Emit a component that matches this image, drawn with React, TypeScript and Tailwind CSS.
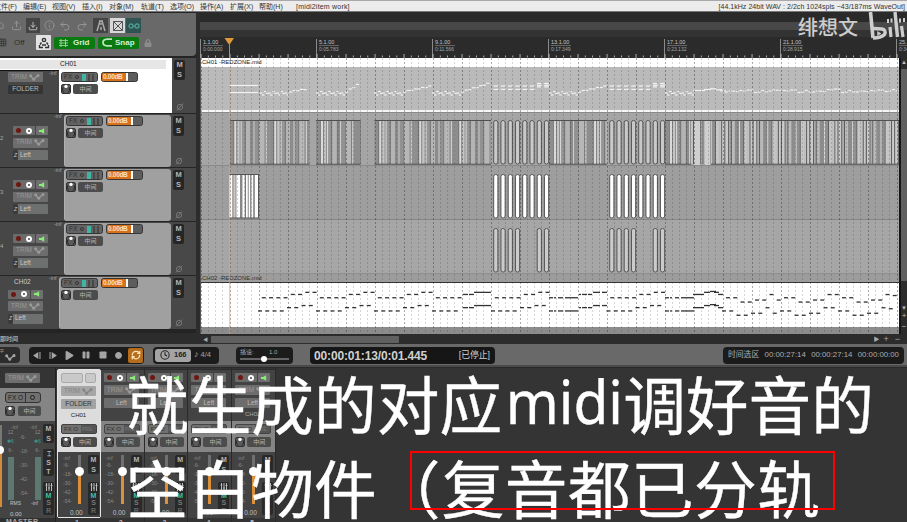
import React from "react";
import {
  FaPlay, FaPause, FaStop, FaCircle, FaLock,
} from "react-icons/fa";
import { RefreshCw, Clock, Upload, Download, Grid3x3, Info, Undo2, Redo2 } from "lucide-react";

const CJK = "font-['Liberation_Sans','Noto_Sans_CJK_SC',sans-serif]";
const ORIGIN = 200.6;
const BEAT = 7.25;

/* ---------- note and clip data ---------- */

type Dash = [x: number, y: number, w: number];

function phrase(s: number, end: number, rise: number): Dash[] {
  const out: Dash[] = [];
  for (let i = 0; i < 7; i++) {
    out.push([s + i * 4.1, i % 2 ? 91.5 : 93, 2.6]);
    out.push([s + 2 + i * 4.1, i % 2 ? 93.5 : 95, 2.4]);
  }
  const n = Math.floor((end - s - 29) / 3.6);
  for (let i = 0; i < n; i++) {
    out.push([s + 29 + i * 3.6, 92 - (rise * i) / n - (i % 2 ? 0.8 : 0), 3.2]);
  }
  return out;
}

function pairs(s: number): Dash[] {
  const out: Dash[] = [];
  for (let i = 0; i < 8; i++) {
    const y = i > 5 ? 83.5 : 86;
    out.push([s + i * BEAT, y, 4.6], [s + i * BEAT, y + 3.4, 4.6]);
    if (i > 5) out.push([s + i * BEAT, y + 1.8, 4.6]);
  }
  return out;
}

const wave = [92, 91, 90.5, 91.5, 92.5, 91, 90, 91.8, 90.5, 92, 91.2, 90.2];
const ch1Notes: Dash[] = [
  [229, 85.5, 29], [229, 92.5, 29],
  ...phrase(260, 309, 3), ...phrase(316, 361, 9), ...phrase(374, 432, 6), ...phrase(432, 491, 9),
  ...pairs(493.5), ...phrase(549, 607, 6), ...pairs(609.5), ...phrase(665, 694, 2),
  [693, 90.5, 12], [704, 89.5, 7], [710, 88.8, 6], [716, 89.8, 6], [720, 90.8, 6],
  ...Array.from({ length: 48 }, (_, i): Dash => [725 + i * 3.63, wave[(i * 5) % 12] + (i % 16 > 11 ? -1 : 0), 2.9]),
];

const L = 297.7, M = 294.4, H = 292.3;
function eight(s: number): Dash[] {
  const ys = [L, L, L, L, M, M, H, H];
  return ys.flatMap((y, i): Dash[] => [
    [s + 3.8 + i * BEAT, y, 4], [s + i * BEAT, y + 13.2, 4],
  ]);
}
function both(d: Dash[]): Dash[] {
  return d.flatMap(([x, y, w]): Dash[] => [[x, y, w], [x, y + 13.2, w]]);
}
const tail = [297.7, 297.7, 302, 302, 300, 300, 294.5, 300, 297.7, 297.7, 302, 302, 300, 300, 294.5, 294.5, 297.7, 297.7, 302, 302, 300, 300, 294.5, 295.5];
const ch2Notes: Dash[] = [
  ...eight(258), ...eight(316), ...eight(374),
  ...eight(432).slice(0, 8),
  ...both([[463, M, 5], [469, M, 5], [474, H, 17]]),
  ...eight(491),
  ...both([[549, L, 4], [554, L, 2], [558, L, 5], [565, L, 13], [579, M, 2], [582, M, 5], [588, M, 4], [593, H, 7], [602, H, 5]]),
  ...eight(606.5),
  ...both([[665, L, 4], [670, L, 2], [675, L, 4], [681, L, 13], [693, M, 11], [704, H, 6], [710, 291.4, 6], [714, H, 5], [718, M, 5]]),
  ...tail.flatMap((y, i): Dash[] => [[726 + i * BEAT, y, 4], [722 + i * BEAT, y + 13.2, 4]]),
];

const stripes: [number, string][] = [
  [4, "#8d8d8d"], [0.8, "#5e5e5e"], [2.2, "#dadada"], [0.8, "#6a6a6a"], [2.4, "#c4c4c4"], [1, "#8a8a8a"],
  [1, "#e4e4e4"], [3.2, "#969696"], [0.9, "#606060"], [4.6, "#b4b4b4"], [1, "#747474"], [2.2, "#8b8b8b"],
  [1, "#d2d2d2"], [3.9, "#929292"], [0.8, "#666666"], [5.4, "#b7b7b7"], [1, "#777777"], [1.4, "#cccccc"], [2.4, "#8d8d8d"],
];
const dense: [number, string][] = [
  [2, "#c2c2c2"], [1, "#585858"], [2, "#c9c9c9"], [1.2, "#666666"], [2.6, "#cacaca"], [1, "#606060"], [1.8, "#aaaaaa"],
  [1, "#555555"], [3, "#bababa"], [4.2, "#8c8c8c"], [1, "#dddddd"], [3.1, "#909090"], [1, "#5c5c5c"], [3.4, "#c6c6c6"],
];
function fill(from: number, to: number, pat: [number, string][]) {
  const out: { x: number; w: number; c: string }[] = [];
  let x = from;
  for (let i = 0; x < to; i++) {
    const [w, c] = pat[i % pat.length];
    out.push({ x, w: Math.min(w, to - x), c });
    x += w;
  }
  return out;
}
const runs: [number, number][] = [[229.5, 309.5], [316, 360.5], [374.5, 491], [549, 607], [665, 691]];

/* ---------- small widgets ---------- */

function Env({ className = "" }: { className?: string }) {
  return (
    <svg viewBox="0 0 11 7" className={`h-[7px] w-[11px] ${className}`} fill="none" stroke="currentColor" strokeWidth="1.3">
      <path d="M1.5 2 L4.5 5.3 L9 1.5" />
      <circle cx="1.7" cy="1.8" r=".9" fill="currentColor" /><circle cx="4.8" cy="5.2" r=".9" fill="currentColor" /><circle cx="9" cy="1.6" r=".9" fill="currentColor" />
    </svg>
  );
}

function Trim() {
  return (
    <div className="flex h-[10px] w-[35px] shrink-0 items-center justify-between rounded-[1px] bg-[#6d6d6d] px-[3px] text-[6.5px] leading-none text-[#9a9a9a]">
      <span>TRIM</span><Env />
    </div>
  );
}

function Speaker() {
  return (
    <svg viewBox="0 0 7 7" className="h-[6px] w-[6px]" fill="#86f070"><path d="M0 2.2h2.4L6 .2v6.6L2.4 4.8H0z" /></svg>
  );
}

function RecordRow() {
  return (
    <div className="flex h-[9px] w-[35px] shrink-0 gap-[1px]">
      <div className="flex w-[22px] items-center justify-around rounded-[1px] bg-[#6b6b6b]">
        <span className="h-[5px] w-[5px] rounded-full bg-[#6e1710]" />
        <span className="h-[6px] w-[6px] rounded-full border-2 border-white bg-[#444]" />
      </div>
      <div className="flex flex-1 items-center justify-center rounded-[1px] bg-[#6f6f6f]"><Speaker /></div>
    </div>
  );
}

function LeftInput() {
  return (
    <div className="flex h-[10px] w-[35px] shrink-0 items-center rounded-[1px] bg-[#6e7070] text-[6.5px] leading-none text-[#c8c8c8]">
      <span className="flex h-full w-[5px] items-center justify-center rounded-[1px] bg-[#3a3a3a] text-[5px] italic">Z</span>
      <span className="pl-[2px]">Left</span>
    </div>
  );
}

function Knob({ className = "" }: { className?: string }) {
  return (
    <div className={`flex h-[10px] w-[10px] shrink-0 items-center justify-center rounded-[2px] border border-[#333] bg-[#5a5a5a] ${className}`}>
      <svg viewBox="0 0 10 10" className="h-[10px] w-[10px] shrink-0" fill="none">
        <path d="M3 8.5A3.6 3.6 0 0 1 2 3.4M7 8.5A3.6 3.6 0 0 0 8 3.4" stroke="#222" strokeWidth="1" />
        <circle cx="5" cy="2.4" r="1.7" fill="#fff" />
      </svg>
    </div>
  );
}

function Pan({ className = "" }: { className?: string }) {
  return (
    <div className={`flex h-[10px] items-center justify-center rounded-[2px] bg-[#4c4c4c] text-[6px] leading-none text-[#b5b5b5] ${CJK} ${className}`}>中间</div>
  );
}

function Controls() {
  return (
    <div className="flex flex-col gap-[2px]">
      <div className="flex gap-[3px]">
        <div className="flex h-[10px] w-[37px] items-center rounded-[2.5px] border border-[#363636] bg-[#636363] pl-[2px] text-[6.5px] leading-none text-[#303030]">
          FX<span className="ml-[3px] h-[4px] w-[4px] rounded-full border border-[#363636]" />
          <span className="ml-[3px] h-[7px] w-[4px] bg-[#3fb5a4]" />
          <span className="ml-[2px] h-[7px] w-[2px] bg-[#484848]" /><span className="ml-[2px] h-[7px] w-[2px] bg-[#484848]" />
        </div>
        <div className="flex h-[10px] w-[37px] overflow-hidden rounded-[2.5px] border border-[#363636] bg-[#5d5d5d]">
          <div className="flex w-[24px] items-center bg-[#d9701a] pl-[1px] text-[6.5px] leading-none font-bold tracking-[-0.3px] whitespace-nowrap text-[#fbe1c8]">0.00dB</div>
          <div className="w-[1.5px] bg-white" />
        </div>
      </div>
      <div className="flex gap-[2px]"><Knob /><Pan className="w-[25px]" /></div>
    </div>
  );
}

function Inf() {
  return <span className="-ml-[1px] text-[5.5px] leading-none text-[#a5a5a5]">-inf</span>;
}

function MuteSolo() {
  return (
    <div className="flex w-[24px] shrink-0 flex-col items-start justify-between bg-[#484848] pt-[2px] pb-[2px] pl-[2px]">
      <div className="flex h-[20px] w-[11px] flex-col items-center justify-around rounded-[2px] bg-[#262626] text-[7.5px] leading-none font-bold text-[#b5b5b5]">
        <span>M</span><span>S</span>
      </div>
      <svg viewBox="0 0 8 8" className="ml-[2px] h-[8px] w-[8px]" stroke="#777" strokeWidth="1" fill="none"><circle cx="4" cy="4" r="2.6" /><path d="M1 7.4L7 .6" /></svg>
    </div>
  );
}

function ChildTrack({ n }: { n: string }) {
  return (
    <div className="flex h-[54px] shrink-0 border-t border-[#252525] bg-[#474747]">
      <div className="flex w-[64px] shrink-0">
        <span className="w-[13px] self-center pb-1 text-[6px] text-[#aaa]">{n}</span>
        <div className="flex w-[42px] flex-col gap-[2.5px] pt-[12px]"><RecordRow /><Trim /><LeftInput /></div>
        <Inf />
      </div>
      <div className="my-[1px] h-[52px] w-[107px] rounded-[3px] border-l border-[#b0b0b0] bg-[#a0a0a0] pt-[1px] pl-[1px]"><Controls /></div>
      <MuteSolo />
    </div>
  );
}

/* ---------- top bars ---------- */

const menus: [string, string][] = [
  ["文件(F)", "w-[29px]"], ["编辑(E)", "w-[29px]"], ["视图(V)", "w-[30px]"], ["插入(I)", "w-[27px]"], ["对象(M)", "w-[32px]"],
  ["轨道(T)", "w-[29px]"], ["选项(O)", "w-[30px]"], ["操作(A)", "w-[30px]"], ["扩展(X)", "w-[29px]"], ["帮助(H)", "w-[37px]"],
];

function MenuBar() {
  return (
    <div className={`flex h-[12px] shrink-0 items-center overflow-hidden border-t border-[#a9a7a9] border-b border-b-[#777] bg-[#ececec] text-[7px] leading-none whitespace-nowrap text-[#333] ${CJK}`}>
      <div className="-ml-[6px] flex">
        {menus.map(([t, w]) => <span key={t} className={`${w} shrink-0`}>{t}</span>)}
      </div>
      <span className="text-[7px] tracking-[0.2px]">[midi2item work]</span>
      <span className="ml-auto pr-[2px] text-[7px] tracking-[0.04px]">[44.1kHz 24bit WAV : 2/2ch 1024spls ~43/187ms WaveOut]</span>
    </div>
  );
}

function Toolbar() {
  return (
    <div className="h-[43px] w-[196px] shrink-0 rounded-br-[4px] bg-[#696969] pt-[5px] text-[#959595]">
      <div className="flex h-[15px] items-center">
        <div className="w-[11px]"><svg viewBox="0 0 5 9" className="h-[9px] w-[4px]" fill="none" stroke="currentColor"><path d="M0 1h2l2 3v4H0" /></svg></div>
        <Upload size={11} className="mr-[4px]" />
        <div className="mr-[4px] flex h-[15px] w-[14px] items-center justify-center bg-[#444] text-[#ccc]"><Download size={10} /></div>
        <Info size={11} className="mr-[4px]" />
        <Undo2 size={12} className="mr-[5px]" />
        <Redo2 size={12} className="mr-[5px]" />
        <div className="mr-[2px] flex h-[15px] w-[15px] items-center justify-center bg-[#444]">
          <svg viewBox="0 0 12 12" className="h-[12px] w-[12px]" fill="none" stroke="#aaa" strokeWidth="1.5"><path d="M5 1L2 11M7 1L10 11M4 1h4M6 3v2M6 7v3" /></svg>
        </div>
        <div className="mr-[1px] flex h-[15px] w-[15px] items-center justify-center bg-[#d8d8d8]">
          <svg viewBox="0 0 12 12" className="h-[12px] w-[12px]" fill="none" stroke="#555" strokeWidth="1"><path d="M1.5 1.5h9v9h-9zM1.5 1.5l9 9M10.5 1.5l-9 9" /></svg>
        </div>
        <div className="flex h-[15px] w-[15px] items-center justify-center bg-[#2f5351]">
          <svg viewBox="0 0 12 8" className="h-[8px] w-[12px]" fill="none" stroke="#4b9c90" strokeWidth="1.3"><rect x="1" y="2" width="4" height="4" rx="2" /><rect x="7" y="2" width="4" height="4" rx="2" /><path d="M4.5 4h3" /></svg>
        </div>
      </div>
      <div className="mt-[2px] flex h-[15px] items-center">
        <Grid3x3 size={9} className="-ml-[2px] mr-[7px] text-[#333]" />
        <span className="w-[22px] text-[8px] text-[#2f2f2f]">Off</span>
        <div className="mr-[3px] flex h-[15px] w-[15px] items-center justify-center rounded-[1px] bg-[#e2e2e2]">
          <svg viewBox="0 0 12 12" className="h-[12px] w-[12px]" fill="none" stroke="#333" strokeWidth="1.4"><circle cx="6" cy="3" r="1.6" /><path d="M3.5 5.5L2 7.5M8.5 5.5L10 7.5M1.5 8v2.5H5M10.5 8v2.5H7M4 8h4" /></svg>
        </div>
        <div className="mr-[3px] flex h-[12px] w-[41px] items-center rounded-[2px] bg-[#087a10] pl-[5px] text-[8px] font-bold text-[#d7efd5]">
          <svg viewBox="0 0 9 8" className="mr-[5px] h-[8px] w-[9px]" fill="none" stroke="#9ed49d" strokeWidth=".9"><path d="M0 1.5h9M0 4h9M0 6.5h9M2 0v8M6.5 0v8" /></svg>Grid
        </div>
        <div className="mr-[5px] flex h-[12px] w-[41px] items-center rounded-[2px] bg-[#087a10] pl-[4px] text-[8px] font-bold text-[#d7efd5]">
          <svg viewBox="0 0 10 9" className="mr-[3px] h-[9px] w-[10px]" fill="none" stroke="#bfe3bd" strokeWidth="1.8"><path d="M10 1.200H5Q1 1.500 1 4.500Q1 7.500 5 7.800H10" /></svg>Snap
        </div>
        <FaLock size={8} className="text-[#8c8c8c]" />
      </div>
    </div>
  );
}

function TrackPanel() {
  return (
    <div className="flex h-[321px] w-[196px] shrink-0 flex-col overflow-hidden bg-[#242424] pt-[1px]">
      <Toolbar />
      <div className="mt-[2px] flex h-[55px] shrink-0 bg-[#484848]">
        <div className="flex w-[172px] flex-col bg-white">
          <div className="flex h-[12px] shrink-0 items-center bg-white">
            <div className="flex h-[9px] w-[166px] items-center bg-[#e6e6e6] pl-[60px] text-[6.5px] leading-none text-[#222]">CH01</div>
          </div>
          <div className="flex flex-1">
            <div className="flex w-[59px] shrink-0 border-t border-[#111] bg-[#474747] pl-[8px]">
              <div className="flex w-[42px] flex-col gap-[2.5px] pt-[1px]">
                <Trim />
                <div className="flex h-[9px] w-[35px] items-center justify-center rounded-[1px] bg-[#343434] text-[6.5px] leading-none text-[#bcbcbc]">FOLDER</div>
              </div>
              <Inf />
            </div>
            <div className="pt-[2px] pl-[2px]"><Controls /></div>
          </div>
        </div>
        <MuteSolo />
      </div>
      <ChildTrack n="2" /><ChildTrack n="3" /><ChildTrack n="4" />
      <div className="flex h-[54px] shrink-0 border-t border-[#252525] bg-[#474747]">
        <div className="flex w-[59px] shrink-0 pl-[8px]">
          <div className="flex w-[42px] flex-col gap-[2.5px] pt-[3px]">
            <span className="h-[8px] pl-[6px] text-[6.5px] leading-none text-[#ccc]">CH02</span>
            <RecordRow /><Trim /><LeftInput />
          </div>
          <Inf />
        </div>
        <div className="my-[1px] h-[52px] w-[112px] rounded-[3px] border-l border-[#b0b0b0] bg-[#a0a0a0] pt-[1px] pl-[1px]"><Controls /></div>
        <MuteSolo />
      </div>
    </div>
  );
}

/* ---------- timeline ---------- */

const marks: [string, string, string][] = [
  ["1.1.00", "0:00.000", "w-[116px]"], ["5.1.00", "0:05.783", "w-[116px]"], ["9.1.00", "0:11.566", "w-[116px]"],
  ["13.1.00", "0:17.349", "w-[116px]"], ["17.1.00", "0:23.132", "w-[116px]"], ["21.1.00", "0:28.915", "w-[116px]"], ["25.1.00", "0:34.698", "w-[20px]"],
];

function Ruler() {
  return (
    <div className="relative flex h-[46px] shrink-0 flex-col overflow-hidden bg-[#2b2b2b]">
      <div className="h-[10px] bg-[#2a2a2a]" /><div className="h-[8px] bg-[#484848]" /><div className="h-[7px] bg-[#333]" />
      <div className="flex h-[21px] pt-[2px]">
        {marks.map(([a, b, w]) => (
          <div key={a} className={`${w} h-[19px] shrink-0 border-l border-[#8a8a8a] pl-[2px] text-[5.5px] leading-[6px] whitespace-nowrap text-[#c4c4c4]`}>
            <div className="w-[20px] border-b border-[#666]">{a}</div><div className="text-[5px] text-[#a5a5a5]">{b}</div>
          </div>
        ))}
      </div>
      <svg className="absolute top-0 left-0 h-[46px] w-[699px]" viewBox="200 12 699 46">
        {Array.from({ length: 97 }, (_, i) => (
          <rect key={i} x={ORIGIN + i * BEAT} y={i % 4 ? 55.5 : 54} width=".9" height={i % 4 ? 2 : 4} fill="#bbb" />
        ))}
        <path d="M224.5 38h9.5l-4 6h-1.5z" fill="#e09a3c" /><rect x="229" y="43" width="1" height="15" fill="#c98a3c" />
      </svg>
    </div>
  );
}

function Pills({ y, fillColor, skip = [] }: { y: number; fillColor: string; skip?: number[] }) {
  return (
    <>
      {[493.7, 609.7].flatMap((s) =>
        Array.from({ length: 8 }, (_, i) => skip.includes(i) ? null : (
          <rect key={`${s}-${i}`} x={s + i * BEAT} y={y} width="4.2" height="43.5" rx="2" fill={fillColor} stroke="#555" strokeWidth="1" />
        )))}
    </>
  );
}

function Arrange() {
  return (
    <div className="flex h-[276px] shrink-0">
      <div className="relative flex w-[699px] flex-col overflow-hidden border-l border-[#555]">
        <div className="h-[9px] shrink-0 bg-white pl-[1px] text-[6px] leading-[9px] text-[#222]">CH01 -REDZONE.mid</div>
        <div className="h-[43px] shrink-0 bg-[#bababa]">
          <svg className="h-[43px] w-[698px]" viewBox="201 67 698 43">
            {ch1Notes.map(([x, y, w], i) => <rect key={i} x={x} y={y - 0.6} width={w} height="1.2" fill="#f2f2f2" />)}
          </svg>
        </div>
        <div className="h-[2px] shrink-0 bg-[#f7f7f7]" />
        <div className="h-[54px] shrink-0 border-t border-b border-[#8a8a8a] bg-[#a5a5a5]">
          <svg className="h-[52px] w-[698px]" viewBox="201 113 698 52">
            {runs.map(([a, b]) => (
              <g key={a}>
                {fill(a, b, stripes).map((s, i) => <rect key={i} x={s.x} y="120.5" width={s.w} height="43.5" fill={s.c} />)}
                <path d={`M${a} 120.5H${b}M${a} 164.2H${b}`} stroke="#505050" strokeWidth="1" />
              </g>
            ))}
            {fill(691, 899, dense).map((s, i) => <rect key={i} x={s.x} y="120.5" width={s.w} height="43.5" fill={s.c} />)}
            <rect x="694" y="121" width="6" height="44" fill="#cfcfcf" /><rect x="705" y="121" width="5" height="44" fill="#cfcfcf" />
            <path d="M691 120.5H899M711 164.2H899" stroke="#505050" strokeWidth="1" />
            <Pills y={120.5} fillColor="#c9c9c9" />
          </svg>
        </div>
        <div className="h-[54px] shrink-0 border-b border-[#868686] bg-[#9e9e9e]">
          <svg className="h-[53px] w-[698px]" viewBox="201 166 698 53">
            <rect x="229" y="174" width="30" height="44" fill="#fcfcfc" />
            {[[232, 2.6, "#aaa"], [235.5, 0.8, "#555"], [240, 2.4, "#888"], [244.8, 1.1, "#666"], [247.8, 0.9, "#888"], [250.2, 1.2, "#777"], [253, 2, "#999"], [258, 1, "#555"]].map(([x, w, c]) => (
              <rect key={x} x={x as number} y="174" width={w as number} height="44" fill={c as string} />
            ))}
            <path d="M229 174.5h30M229 218h30" stroke="#555" />
            <Pills y={174.5} fillColor="#fff" />
          </svg>
        </div>
        <div className="h-[54px] shrink-0 border-b border-[#8e8e8e] bg-[#a6a6a6]">
          <svg className="h-[53px] w-[698px]" viewBox="201 220 698 53"><Pills y={228.5} fillColor="#cbcbcb" skip={[4, 5]} /></svg>
        </div>
        <div className="h-[9px] shrink-0 border-b border-[#333] bg-[#9c9c9c] pl-[1px] text-[6px] leading-[9px] text-[#333]">CH02 -REDZONE.mid</div>
        <div className="h-[44px] shrink-0 bg-white">
          <svg className="h-[44px] w-[698px]" viewBox="201 283 698 44">
            {ch2Notes.map(([x, y, w], i) => <rect key={i} x={x} y={y - 0.6} width={w} height="1.3" fill="#333" />)}
          </svg>
        </div>
        <div className="h-[7px] shrink-0 bg-[#8c8c8c]" />
        <svg className="absolute top-0 left-0 h-[276px] w-[698px]" viewBox="201 58 698 276">
          {Array.from({ length: 97 }, (_, i) => (
            <path key={i} d={`M${Math.round(ORIGIN + i * BEAT) + 0.5} 58V334`} stroke="#222" strokeWidth="1" strokeDasharray="2 2" opacity={i % 4 ? 0.18 : 0.38} />
          ))}
          <rect x="229" y="67" width="1.4" height="267" fill="#e0a860" opacity=".55" />
        </svg>
      </div>
      <div className="flex w-[8px] flex-col items-center border-l-2 border-[#161616] bg-[#2c2c2c] text-[8px] leading-none text-[#bbb]">
        <span className="h-[11px] pt-[1px] text-[6px]">▲</span>
        <div className="h-[212px] w-full rounded-[1px] bg-[#606060]" />
        <span className="mt-[24px] text-[6px]">▼</span><span className="mt-[1px]">+</span><span className="mt-[3px]">−</span>
      </div>
    </div>
  );
}

/* ---------- transport ---------- */

function Transport() {
  return (
    <div className="flex h-[23px] shrink-0 items-center border-b-2 border-[#4a4a4a] bg-[#696969] pt-[1px] text-[#a5a5a5]">
      <div className="flex h-[16px] w-[20px] items-center rounded-r-[4px] bg-[#2d2d2d] text-[5px]"><span className="-ml-[2px] pb-[6px]">FF</span><Env className="mt-[4px] ml-[1px]" /></div>
      <div className="ml-[9px] flex h-[17px] w-[115px] items-center rounded-[4px] bg-[#1c1c1c] pl-[4px]">
        <svg viewBox="0 0 9 8" className="mr-[8px] h-[7px] w-[8px]" fill="currentColor"><path d="M6 0v8L0 4zM7.3 0h1.2v8H7.3z" /></svg>
        <svg viewBox="0 0 9 8" className="mr-[8px] h-[7px] w-[8px]" fill="currentColor"><path d="M3 0v8l6-4zM.5 0h1.2v8H.5z" /></svg>
        <FaPlay size={9} className="mr-[8px]" /><FaPause size={8} className="mr-[9px]" /><FaStop size={8} className="mr-[8px]" /><FaCircle size={7} className="mr-[6px]" />
        <div className="flex h-[15px] w-[15px] items-center justify-center rounded-[2px] bg-[#b56d1c] text-[#ffe3bd]"><RefreshCw size={10} strokeWidth={3} /></div>
      </div>
      <div className="ml-[9px] flex h-[17px] w-[66px] items-center rounded-[4px] bg-[#1c1c1c] pl-[2px] text-[7.5px] font-bold">
        <div className="flex h-[13px] w-[36px] items-center gap-[4px] rounded-[3px] bg-[#a4a4a4] pl-[5px] text-[#222]"><Clock size={10} strokeWidth={2.5} />166</div>
        <span className="ml-[3px] text-[9px]">♪</span><span className="ml-[2px] font-normal">4/4</span>
      </div>
      <div className={`ml-[17px] flex h-[17px] w-[57px] flex-col rounded-[4px] bg-[#1c1c1c] px-[4px] pt-[2px] text-[6px] leading-[7px] ${CJK}`}>
        <div className="flex"><span className="w-[29px]">播速:</span><span>1.0</span></div>
        <div className="relative mt-[2px] h-[2px] bg-[#666]"><span className="absolute -top-[2px] left-[21px] h-[6px] w-[6px] rounded-full bg-white" /></div>
      </div>
      <div className={`ml-[17px] flex h-[17px] w-[185px] items-center justify-between rounded-[4px] bg-[#161616] pt-[1px] pr-[5px] pl-[4px] text-[12px] font-bold text-[#d0d0d0] ${CJK}`}>
        <span className="tracking-[-0.15px]">00:00:01:13/0:01.445</span><span className="text-[8.8px] font-normal">[已停止]</span>
      </div>
      <div className={`mr-[3px] ml-auto flex h-[17px] w-[181px] items-center justify-between rounded-[4px] bg-[#1b1b1b] px-[5px] text-[7.8px] whitespace-nowrap text-[#adadad] ${CJK}`}>
        <span>时间选区</span><span>00:00:27:14</span><span>00:00:27:14</span><span>00:00:00:00</span>
      </div>
    </div>
  );
}

/* ---------- mixer ---------- */

function SideStack() {
  return (
    <div className="flex h-[33px] w-[11px] flex-col items-center justify-between rounded-[2px] bg-[#292929] py-[1px] text-[7px] leading-none font-bold">
      <svg viewBox="0 0 8 8" className="h-[8px] w-[8px]" stroke="#bbb" fill="none" strokeWidth="1"><path d="M1.500 0v8M4 0v8M6.500 0v8M.5 2h2M3 5h2M5.500 2.500h2" /></svg>
      <span className="text-[#3fc0ab]">M</span><span className="text-[#777]">S</span><span className="text-[#666]">R</span>
    </div>
  );
}

function Master() {
  return (
    <div className="flex w-[56px] shrink-0 flex-col border-r border-[#222]">
      <div className="h-[20px] shrink-0 pt-[5px] pl-[5px]"><Trim /></div>
      <div className="flex h-[33px] shrink-0 flex-col gap-[3px] bg-[#858585] pt-[4px] pl-[5px]">
        <div className="flex h-[11px] w-[36px] items-center rounded-[3px] border border-[#333] bg-[#707070] pl-[2px] text-[6.5px] text-[#222]">
          FX O<span className="ml-[2px] h-full border-l border-[#333]" /><span className="ml-[4px] h-[5px] w-[5px] rounded-full border-[1.5px] border-[#222]" />
        </div>
        <div className="flex gap-[3px]"><Knob /><Pan className="w-[23px]" /></div>
      </div>
      <div className="flex h-[97px] shrink-0 bg-[#444]">
        <div className="relative w-[5px] shrink-0 pt-[4px]">
          <div className="h-[26px] w-[2px] bg-[#777]" /><div className="h-[56px] w-[2px] bg-[#d58a35]" />
          <span className="absolute top-[25px] -left-[4px] h-[8px] w-[8px] rounded-full bg-white" />
        </div>
        <div className="flex w-[38px] flex-col text-[5px] leading-none text-[#8a8a8a]">
          <div className="flex justify-around pt-[4px]"><span>-inf</span><span>-inf</span></div>
          <div className="flex h-[70px] justify-between px-[2px]">
            <div className="flex w-[7px] flex-col items-center gap-[4px]"><span>12</span><span className="text-[#3b9b91]">✱6</span><span>6-</span><span className="w-[6px] flex-1 bg-[#5c7871]" /></div>
            <div className="flex flex-col justify-around"><span>-6-</span><span>-18-</span><span>-30-</span><span>-42-</span><span>-54-</span></div>
            <div className="flex w-[7px] flex-col items-center gap-[4px]"><span>12</span><span className="text-[#3b9b91]">✱6</span><span>6-</span><span className="w-[6px] flex-1 bg-[#5c7871]" /></div>
          </div>
          <div className="flex justify-around pt-[1px] text-[#c5c5c5]"><span>RMS</span><span>-inf</span></div>
          <span className="pt-[5px] pl-[5px] text-[6px] text-[#c5c5c5]">0.00</span>
        </div>
        <div className="flex flex-col gap-[6px] pt-[3px] text-[7px] leading-none font-bold text-[#b5b5b5]">
          <div className="flex h-[19px] w-[11px] flex-col items-center justify-around rounded-[2px] bg-[#292929]"><span>M</span><span>S</span></div>
          <div className="flex h-[27px] w-[11px] flex-col items-center justify-around rounded-[2px] bg-[#292929]"><span>⌶</span><span>S</span><span>T</span></div>
          <SideStack />
        </div>
      </div>
      <div className="h-[5px] overflow-hidden bg-[#303030] pl-[6px] text-[7px] leading-[8px] font-bold tracking-[0.5px] text-[#aaa]">MASTER</div>
    </div>
  );
}

function Strip({ n, name = "", selected = false }: { n: number; name?: string; selected?: boolean }) {
  return (
    <div className={`flex h-[154px] w-[43.800px] shrink-0 flex-col overflow-hidden pt-[1px] ${selected ? "text-[#222]" : "border-r border-[#2a2a2a] text-[#aaa]"}`}>
      <div className={`flex h-[149px] shrink-0 flex-col ${selected ? "rounded-[2px] border border-[#e5e5e5] bg-[#dcdcdc]" : "border-t border-[#2c2c2c] bg-[#434343]"}`}>
        <div className="flex h-[51px] shrink-0 flex-col gap-[3px] pt-[3px] pl-[3px]">
          {selected ? <div className="flex gap-[2px]"><span className="h-[10px] w-[22px] rounded-[2px] border border-[#aaa] bg-[#c9c9c9]" /><span className="h-[10px] w-[11px] rounded-[2px] border border-[#aaa] bg-[#c9c9c9]" /></div> : <RecordRow />}
          {selected
            ? <div className="flex h-[10px] w-[35px] items-center justify-between rounded-[1px] bg-[#a6a6a6] px-[3px] text-[6.500px] leading-none text-[#858585]"><span>TRIM</span><Env /></div>
            : <Trim />}
          <div className={`flex h-[10px] w-[35px] items-center justify-center rounded-[1px] text-[6.500px] leading-none ${selected ? "bg-[#a3a3a3] text-[#333]" : "bg-[#6d6d6d] text-[#bbb]"}`}>{selected ? "FOLDER" : "Left"}</div>
          <span className="w-[35px] text-center text-[6px] leading-none">{name}</span>
        </div>
        <div className={`flex h-[31px] shrink-0 flex-col gap-[3px] pt-[3px] pl-[3px] ${selected ? "bg-[#dcdcdc]" : "bg-[#858585]"}`}>
          <div className="flex h-[10px] w-[36px] items-center rounded-[2px] border border-[#444] bg-[#707070] pl-[2px] text-[6px] leading-none text-[#333]">FX O<span className="ml-[3px] flex h-full flex-1 items-center bg-[#555] pl-[1px] text-[5px] text-[#777]">PRE</span></div>
          <div className="flex gap-[2px]"><Knob /><Pan className="w-[24px]" /></div>
        </div>
        <div className="flex flex-1 bg-[#434343] text-[5px] text-[#888]">
          <div className="relative flex w-[28px] flex-col pt-[3px] pl-[5px]">
            <span className="leading-[6px]">-inf</span>
            {["-6-", "-18-", "-30-", "-42-", "-54-"].map((t) => <span key={t} className="leading-[9px]">{t}</span>)}
            <span className="pt-[3px] pl-[7px] text-[6.500px] leading-[7px] text-[#c0c0c0]">0.00</span>
            <div className="absolute top-[3px] left-[20px] h-[14px] w-[3px] bg-[#707070]" />
            <div className="absolute top-[17px] left-[20px] h-[35px] w-[3px] bg-[#dc9039]" />
            <span className="absolute top-[15px] left-[17px] h-[9px] w-[9px] rounded-full bg-white" />
          </div>
          <div className="flex flex-col gap-[8px] pt-[3px] pl-[2px] text-[7px] leading-none font-bold text-[#b5b5b5]">
            <div className="flex h-[19px] w-[11px] flex-col items-center justify-around rounded-[2px] bg-[#292929]"><span>M</span><span>S</span></div>
            <SideStack />
          </div>
        </div>
      </div>
      <span className="pt-[1px] pl-[18px] text-[7px] leading-[8px] font-bold text-[#bbb]">{n}</span>
    </div>
  );
}

/* ---------- overlays ---------- */

function Caption() {
  return (
    <div className="absolute top-[360px] left-[126px] font-['Noto_Sans_CJK_SC',sans-serif] text-[62.700px] leading-[83.500px] whitespace-nowrap text-white [-webkit-text-stroke:0.4px_white]">
      <div className="flex h-[83.500px]">
        <span>就生成的对应</span>
        <span className="w-[121px] origin-left scale-x-[0.93] pl-[4px] font-['Noto_Sans',sans-serif] text-[61px] leading-[81px]">midi</span>
        <span>调好音的</span>
      </div>
      <div className="flex h-[83.500px]">
        <span>空白物件</span>
        <span className="w-[65px] pl-[1px]">（</span>
        <span className="tracking-[0.400px]">复音都已分轨</span>
      </div>
    </div>
  );
}

function Watermark() {
  return (
    <div className="absolute top-[12px] left-[798px] flex h-[30px] w-[109px] overflow-hidden font-['Noto_Sans_CJK_SC',sans-serif] text-[20px] leading-[29px] font-medium text-[#cdcdcd]">
      <span className="w-[70px] shrink-0">绯想文</span>
      <svg viewBox="0 0 39 30" className="h-[30px] w-[39px] shrink-0" fill="none" stroke="#cdcdcd">
        <path d="M2.500 0L5 26" strokeWidth="3.600" />
        <path d="M5 16.500L14 17Q18.500 18 16.500 22.500Q13 26 5 26" strokeWidth="3.400" />
        <path d="M9.500 19.500l3.500 2-3.500 2z" fill="#cdcdcd" strokeWidth=".5" />
        <path d="M22 15L23 25M33.500 14L35 25" strokeWidth="3.200" />
        <path d="M27 0L29.500 25" strokeWidth="3.400" />
        <path d="M20 7v4M23.500 6.500v4M32 6.500v4M36 6v4" strokeWidth="2" />
      </svg>
    </div>
  );
}

export default function App() {
  return (
    <div className="relative flex h-[522px] w-[907px] flex-col overflow-hidden bg-[#2b2b2b] font-['Liberation_Sans','Noto_Sans_CJK_SC',sans-serif]">
      <MenuBar />
      <div className="flex h-[322px] shrink-0">
        <TrackPanel />
        <div className="w-[4px] shrink-0 bg-[#2c2c2c]" />
        <div className="flex w-[707px] flex-col"><Ruler /><Arrange /></div>
      </div>
      <div className={`flex h-[10px] shrink-0 items-center bg-[#2c2c2c] text-[6px] leading-none text-[#aaa] ${CJK}`}>
        <span className="w-[203px] font-bold">即时间</span><span className="w-[8px] text-[5px]">◀</span>
        <div className="h-[7px] w-[188px] rounded-[1px] bg-[#606060]" />
        <span className="ml-auto text-[6px]">▶</span><span className="ml-[4px] text-[9px]">+</span><span className="mr-[7px] ml-[6px] text-[9px]">−</span>
      </div>
      <Transport />
      <div className="flex h-[155px] shrink-0 border-t border-[#2a2a2a] bg-[#343434]">
        <Master />
        <div className="w-[1px] shrink-0" />
        <Strip n={1} name="CH01" selected />
        <Strip n={2} /><Strip n={3} /><Strip n={4} /><Strip n={5} name="CH02" />
      </div>
      <Watermark />
      <Caption />
      <div className="absolute top-[451px] left-[410px] h-[59px] w-[425px] border-2 border-[#fe0000]" />
    </div>
  );
}
